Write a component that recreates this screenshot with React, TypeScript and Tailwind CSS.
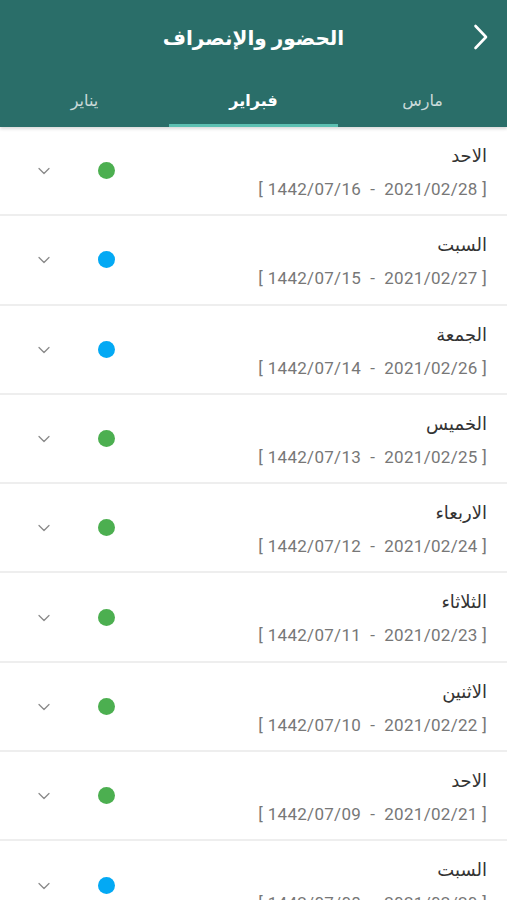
import { ChevronDown } from "lucide-react";

const days = [
  { name: "الاحد", g: "2021/02/28", h: "1442/07/16", c: "green" },
  { name: "السبت", g: "2021/02/27", h: "1442/07/15", c: "blue" },
  { name: "الجمعة", g: "2021/02/26", h: "1442/07/14", c: "blue" },
  { name: "الخميس", g: "2021/02/25", h: "1442/07/13", c: "green" },
  { name: "الاربعاء", g: "2021/02/24", h: "1442/07/12", c: "green" },
  { name: "الثلاثاء", g: "2021/02/23", h: "1442/07/11", c: "green" },
  { name: "الاثنين", g: "2021/02/22", h: "1442/07/10", c: "green" },
  { name: "الاحد", g: "2021/02/21", h: "1442/07/09", c: "green" },
  { name: "السبت", g: "2021/02/20", h: "1442/07/08", c: "blue" },
];

const tabs = ["مارس", "فبراير", "يناير"];

export default function App() {
  return (
    <div
      className="h-[900px] w-full overflow-hidden bg-white"
      style={{ fontFamily: "Roboto, 'DejaVu Sans', sans-serif" }}
    >
      <header dir="rtl" className="relative z-10 bg-[#2a6e69] shadow-[0_2px_3px_rgba(0,0,0,0.15)]">
        <div className="relative flex h-[75px] items-center justify-center">
          <button className="absolute right-[18px] top-[24px] text-white">
            <svg width="16" height="26" viewBox="0 0 16 26" fill="none">
              <path d="M2.5 2 L13 13 L2.5 24" stroke="currentColor" strokeWidth="2.6" strokeLinecap="round" strokeLinejoin="round" />
            </svg>
          </button>
          <h1 className="text-[20px] font-bold text-white">الحضور والإنصراف</h1>
        </div>
        <nav className="grid h-[52px] grid-cols-3">
          {tabs.map((t, i) => (
            <div
              key={t}
              className={
                i === 1
                  ? "flex items-center justify-center border-b-[3px] border-[#5cbfb1] pt-[3px] text-[16px] font-bold text-white"
                  : "flex items-center justify-center border-b-[3px] border-transparent pt-[3px] text-[16px] text-white/75"
              }
            >
              {t}
            </div>
          ))}
        </nav>
      </header>

      <ul>
        {days.map((d, i) => (
          <li key={i} className="flex h-[89.3px] border-b-[2px] border-[#eeeeee]">
            <div className="flex w-[54px] items-center justify-end pt-[1px]">
              <ChevronDown size={20} strokeWidth={1.5} className="text-[#8a8a8a]" />
            </div>
            <div className="flex items-center pl-[44px]">
              <span
                className={
                  d.c === "green"
                    ? "h-[17px] w-[17px] rounded-full bg-[#4caf50]"
                    : "h-[17px] w-[17px] rounded-full bg-[#03a9f4]"
                }
              />
            </div>
            <div className="flex flex-1 flex-col items-end pr-[20px] pt-[16px]">
              <div dir="rtl" className="text-[18px] leading-[26px] text-[#333333]">
                {d.name}
              </div>
              <div dir="ltr" className="mt-[8px] whitespace-pre text-[17px] leading-[24px] tracking-[0.3px] text-[#777777]">
                {`[ ${d.h}  -  ${d.g} ]`}
              </div>
            </div>
          </li>
        ))}
      </ul>
    </div>
  );
}
